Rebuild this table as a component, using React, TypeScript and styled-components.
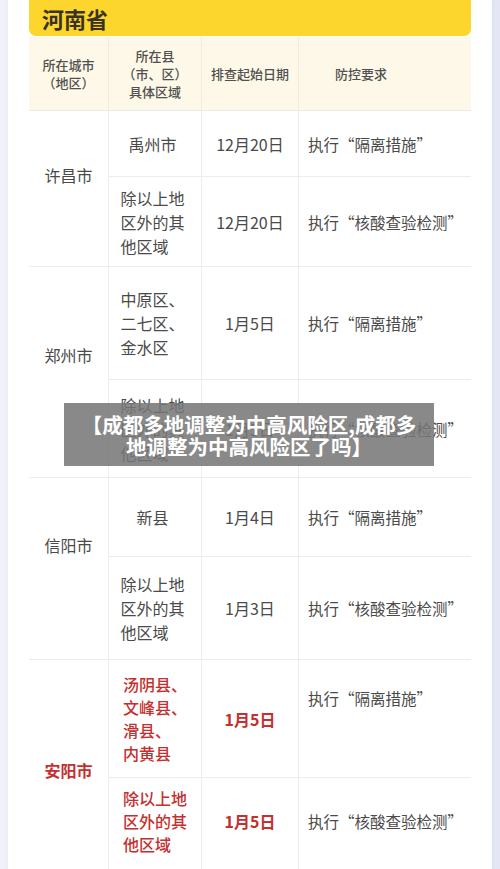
import React from "react";
import styled, { createGlobalStyle } from "styled-components";

const GlobalStyle = createGlobalStyle`
  html, body {
    margin: 0;
    padding: 0;
    background: #eceef8;
    overflow: hidden;
    font-family: "Noto Sans CJK SC", "Noto Sans", sans-serif;
  }
`;

const COLORS = {
  YELLOW: "#fcd62c",
  CREAM: "#fdf8e7",
  LINE: "#ececec",
  TEXT: "#4a4a4a",
  RED: "#c4302f",
};

const Page = styled.div`
  padding: 0 8px;
  min-height: 100vh;
  background: linear-gradient(90deg, #f1f2f9 0%, #eceef9 50%, #e4e6f6 100%);
`;

const Card = styled.div`
  position: relative;
  background: #fff;
  padding: 0 21px;
  min-height: 900px;
  box-shadow: 0 0 4px rgba(60, 70, 140, 0.06);
`;

const Title = styled.div`
  display: flex;
  align-items: center;
  height: 36px;
  padding-left: 13px;
  background: ${COLORS.YELLOW};
  border-radius: 0 0 7px 7px;
  font-size: 22px;
  font-weight: 700;
  color: #3a3222;
`;

const HeadRow = styled.div`
  display: grid;
  grid-template-columns: 79px 93px 97px 173px;
  height: 73px;
  margin-top: 1px;
  background: ${COLORS.CREAM};
`;

const HeadCell = styled.div<{ $pad?: number }>`
  display: flex;
  flex-direction: column;
  justify-content: center;
  align-items: ${(p) => (p.$pad ? "flex-start" : "center")};
  padding-left: ${(p) => p.$pad || 0}px;
  font-size: 13px;
  line-height: 18px;
  font-weight: 500;
  color: #505050;
  text-align: center;

  & + & {
    border-left: 1px solid #f1ebd9;
  }
`;

const Group = styled.div`
  display: flex;
  border-top: 1px solid ${COLORS.LINE};
`;

const City = styled.div<{ $red?: boolean; $lift: number }>`
  width: 79px;
  flex-shrink: 0;
  display: flex;
  align-items: center;
  justify-content: center;
  padding-bottom: ${(p) => Math.max(p.$lift, 0) * 2}px;
  padding-top: ${(p) => Math.max(-p.$lift, 0) * 2}px;
  box-sizing: border-box;
  font-size: 16px;
  font-weight: ${(p) => (p.$red ? 700 : 400)};
  color: ${(p) => (p.$red ? COLORS.RED : COLORS.TEXT)};
`;

const SubRows = styled.div`
  flex: 1;
  display: flex;
  flex-direction: column;
  border-left: 1px solid ${COLORS.LINE};
`;

const SubRow = styled.div<{ $h: number }>`
  display: grid;
  grid-template-columns: 92px 97px 172px;
  height: ${(p) => p.$h}px;

  & + & {
    border-top: 1px solid ${COLORS.LINE};
  }
`;

const Area = styled.div<{ $red?: boolean; $drop: number }>`
  display: flex;
  flex-direction: column;
  justify-content: center;
  align-items: center;
  padding: 0 14px ${(p) => p.$drop}px ${(p) => (p.$red ? 14 : 9)}px;
  font-size: 16px;
  line-height: ${(p) => (p.$red ? 23 : 24)}px;
  font-weight: ${(p) => (p.$red ? 500 : 400)};
  color: ${(p) => (p.$red ? COLORS.RED : COLORS.TEXT)};
`;

const Line = styled.span<{ $single?: boolean }>`
  display: block;
  width: 64px;
  white-space: nowrap;
  text-align: ${(p) => (p.$single ? "center" : "left")};
`;

const DateCell = styled.div<{ $red?: boolean; $drop: number }>`
  display: flex;
  align-items: center;
  justify-content: center;
  padding-bottom: ${(p) => p.$drop}px;
  border-left: 1px solid ${COLORS.LINE};
  font-size: 16px;
  font-weight: ${(p) => (p.$red ? 700 : 400)};
  color: ${(p) => (p.$red ? COLORS.RED : COLORS.TEXT)};
`;

const Rule = styled.div<{ $top?: number; $drop: number }>`
  display: flex;
  align-items: ${(p) => (p.$top ? "flex-start" : "center")};
  padding: ${(p) => p.$top || 0}px 0 ${(p) => p.$drop}px 9px;
  border-left: 1px solid ${COLORS.LINE};
  font-size: 15.5px;
  color: ${COLORS.TEXT};
  white-space: nowrap;
`;

const Banner = styled.div`
  position: absolute;
  left: 56px;
  top: 403px;
  width: 370px;
  height: 63px;
  display: flex;
  flex-direction: column;
  justify-content: center;
  align-items: center;
  background: rgba(118, 118, 118, 0.86);
  color: #fff;
  font-size: 20.5px;
  font-weight: 700;
  line-height: 22px;
  white-space: nowrap;
`;

type Row = {
  area: string[];
  date: string;
  rule: string;
  h: number;
  top?: number;
  drop?: number;
};

type CityGroup = {
  city: string;
  red?: boolean;
  lift: number;
  rows: Row[];
};

const OTHER = ["除以上地", "区外的其", "他区域"];
const ISOLATE = "执行“隔离措施”";
const TEST = "执行“核酸查验检测”";

const groups: CityGroup[] = [
  {
    city: "许昌市",
    lift: 14,
    rows: [
      { area: ["禹州市"], date: "12月20日", rule: ISOLATE, h: 65 },
      { area: OTHER, date: "12月20日", rule: TEST, h: 89 },
    ],
  },
  {
    city: "郑州市",
    lift: 17,
    rows: [
      { area: ["中原区、", "二七区、", "金水区"], date: "1月5日", rule: ISOLATE, h: 112 },
      { area: OTHER, date: "1月5日", rule: TEST, h: 97 },
    ],
  },
  {
    city: "信阳市",
    lift: 24,
    rows: [
      { area: ["新县"], date: "1月4日", rule: ISOLATE, h: 78 },
      { area: OTHER, date: "1月3日", rule: TEST, h: 102 },
    ],
  },
  {
    city: "安阳市",
    red: true,
    lift: 0,
    rows: [
      {
        area: ["汤阴县、", "文峰县、", "滑县、", "内黄县"],
        date: "1月5日",
        rule: ISOLATE,
        h: 117,
        top: 27,
      },
      { area: OTHER, date: "1月5日", rule: TEST, h: 102, drop: 16 },
    ],
  },
];

const App = () => {
  return (
    <Page>
      <GlobalStyle />
      <Card>
        <Title>河南省</Title>
        <HeadRow>
          <HeadCell>
            <span>所在城市</span>
            <span>（地区）</span>
          </HeadCell>
          <HeadCell>
            <span>所在县</span>
            <span>（市、区）</span>
            <span>具体区域</span>
          </HeadCell>
          <HeadCell>排查起始日期</HeadCell>
          <HeadCell $pad={36}>防控要求</HeadCell>
        </HeadRow>

        {groups.map((group) => (
          <Group key={group.city}>
            <City $red={group.red} $lift={group.lift}>
              {group.city}
            </City>
            <SubRows>
              {group.rows.map((row, index) => (
                <SubRow key={index} $h={row.h}>
                  <Area $red={group.red} $drop={row.drop || 0}>
                    {row.area.map((line) => (
                      <Line key={line} $single={row.area.length === 1}>
                        {line}
                      </Line>
                    ))}
                  </Area>
                  <DateCell $red={group.red} $drop={row.drop || 0}>
                    {row.date}
                  </DateCell>
                  <Rule $top={row.top} $drop={row.drop || 0}>
                    {row.rule}
                  </Rule>
                </SubRow>
              ))}
            </SubRows>
          </Group>
        ))}

        <Banner>
          <span>【成都多地调整为中高风险区,成都多</span>
          <span>地调整为中高风险区了吗】</span>
        </Banner>
      </Card>
    </Page>
  );
};

export default App;
